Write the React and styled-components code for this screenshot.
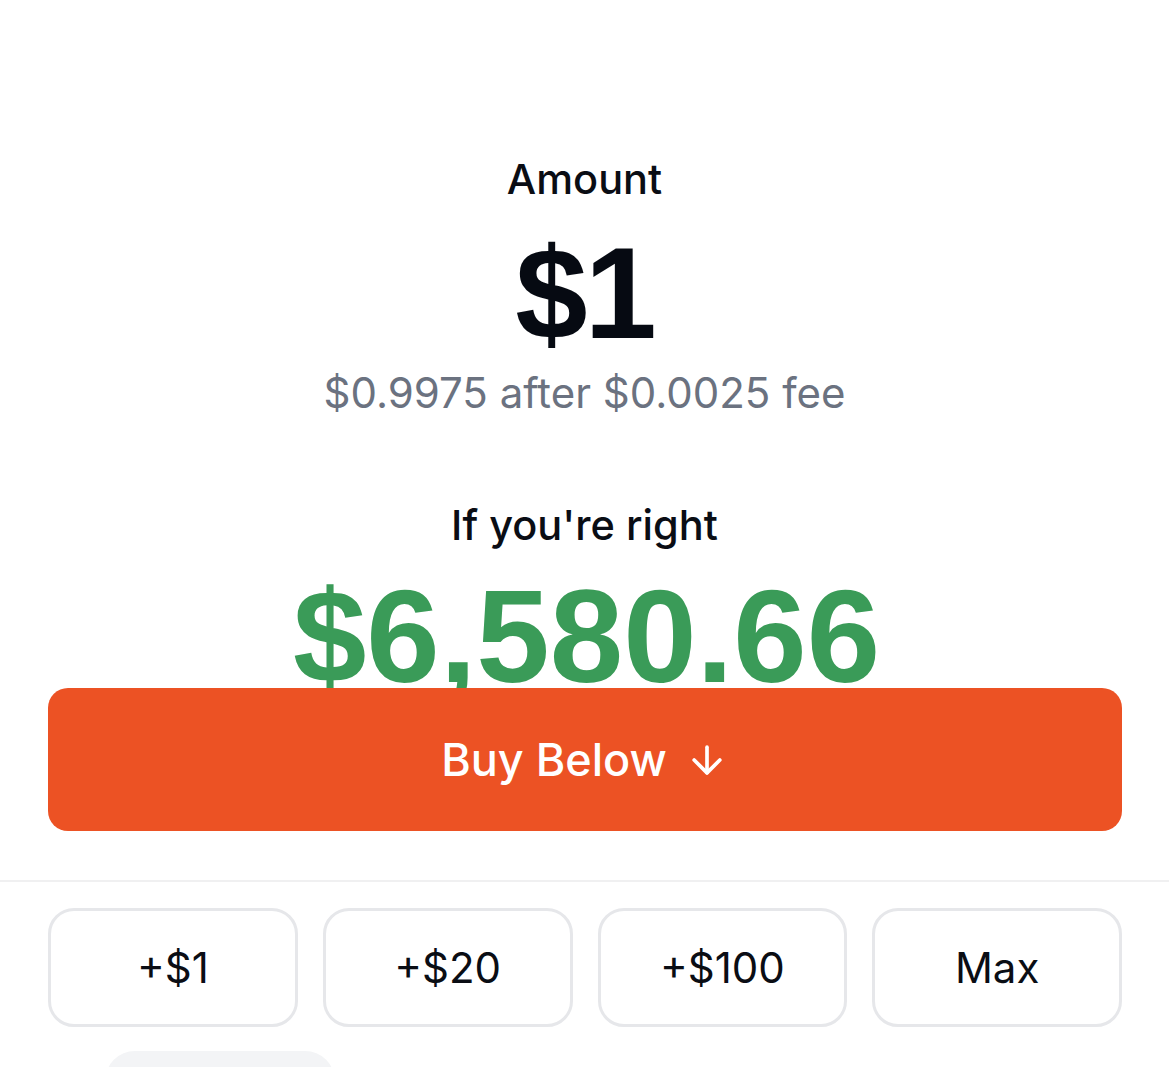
import React from "react";
import styled, { createGlobalStyle } from "styled-components";
import { ArrowDown } from "lucide-react";

const GlobalStyle = createGlobalStyle`
  html, body {
    margin: 0;
    padding: 0;
    background: #ffffff;
  }
  body {
    font-family: Inter, "Noto Sans", sans-serif;
    color: #0a0d14;
  }
`;

const Page = styled.div`
  width: 100%;
  min-height: 1067px;
  background: #fff;
  overflow: hidden;
`;

const Summary = styled.section`
  height: 688px;
  overflow: hidden;
  display: flex;
  flex-direction: column;
  align-items: center;
  padding-top: 154px;
  box-sizing: border-box;
`;

const Label = styled.div`
  font-size: 41.5px;
  line-height: 50px;
  font-weight: 500;
  margin-top: ${(p) => p.$gap || 0}px;
`;

const BigValue = styled.div`
  font-family: "Liberation Sans", Arial, sans-serif;
  font-weight: 700;
  font-size: ${(p) => p.$size || 130}px;
  line-height: ${(p) => p.$size || 130}px;
  letter-spacing: ${(p) => p.$spacing || 0}px;
  color: ${(p) => p.$color || "#060a12"};
  margin-top: ${(p) => p.$gap || 0}px;
  padding-left: ${(p) => p.$shift || 0}px;
`;

const Fee = styled.div`
  font-size: 42px;
  line-height: 50px;
  color: #6b7280;
  margin-top: 10px;
`;

const ActionWrap = styled.div`
  padding: 0 47px 0 48px;
`;

const BuyButton = styled.button`
  width: 100%;
  height: 143px;
  border: none;
  border-radius: 20px;
  background: #ec5224;
  color: #fff;
  font-family: Inter, sans-serif;
  font-size: 45px;
  font-weight: 500;
  display: flex;
  align-items: center;
  justify-content: center;
  gap: 18px;
  cursor: pointer;
  padding: 0;
`;

const Divider = styled.div`
  height: 2px;
  background: #f0f0f1;
  margin-top: 49px;
`;

const QuickRow = styled.div`
  display: grid;
  grid-template-columns: repeat(4, 1fr);
  gap: 25px;
  padding: 26px 47px 0 48px;
`;

const QuickButton = styled.button`
  height: 119px;
  border: 3px solid #e6e7ea;
  border-radius: 26px;
  background: #fff;
  color: #0a0d14;
  font-family: Inter, sans-serif;
  font-size: 42px;
  font-weight: 400;
  display: flex;
  align-items: center;
  justify-content: center;
  padding: 0;
  cursor: pointer;
`;

const Footer = styled.div`
  padding: 24px 0 0 105px;
`;

const Pill = styled.div`
  width: 230px;
  height: 60px;
  border-radius: 30px;
  background: #f3f4f6;
`;

export default function App() {
  const quick = ["+$1", "+$20", "+$100", "Max"];
  return (
    <Page>
      <GlobalStyle />
      <Summary>
        <Label>Amount</Label>
        <BigValue $gap={24} $spacing={-3}>$1</BigValue>
        <Fee>$0.9975 after $0.0025 fee</Fee>
        <Label $gap={82}>If you're right</Label>
        <BigValue $gap={21} $size={132} $shift={4} $color="#3a9b58">$6,580.66</BigValue>
      </Summary>
      <ActionWrap>
        <BuyButton>
          Buy Below
          <ArrowDown size={44} strokeWidth={2} />
        </BuyButton>
      </ActionWrap>
      <Divider />
      <QuickRow>
        {quick.map((q) => (
          <QuickButton key={q}>{q}</QuickButton>
        ))}
      </QuickRow>
      <Footer>
        <Pill />
      </Footer>
    </Page>
  );
}
